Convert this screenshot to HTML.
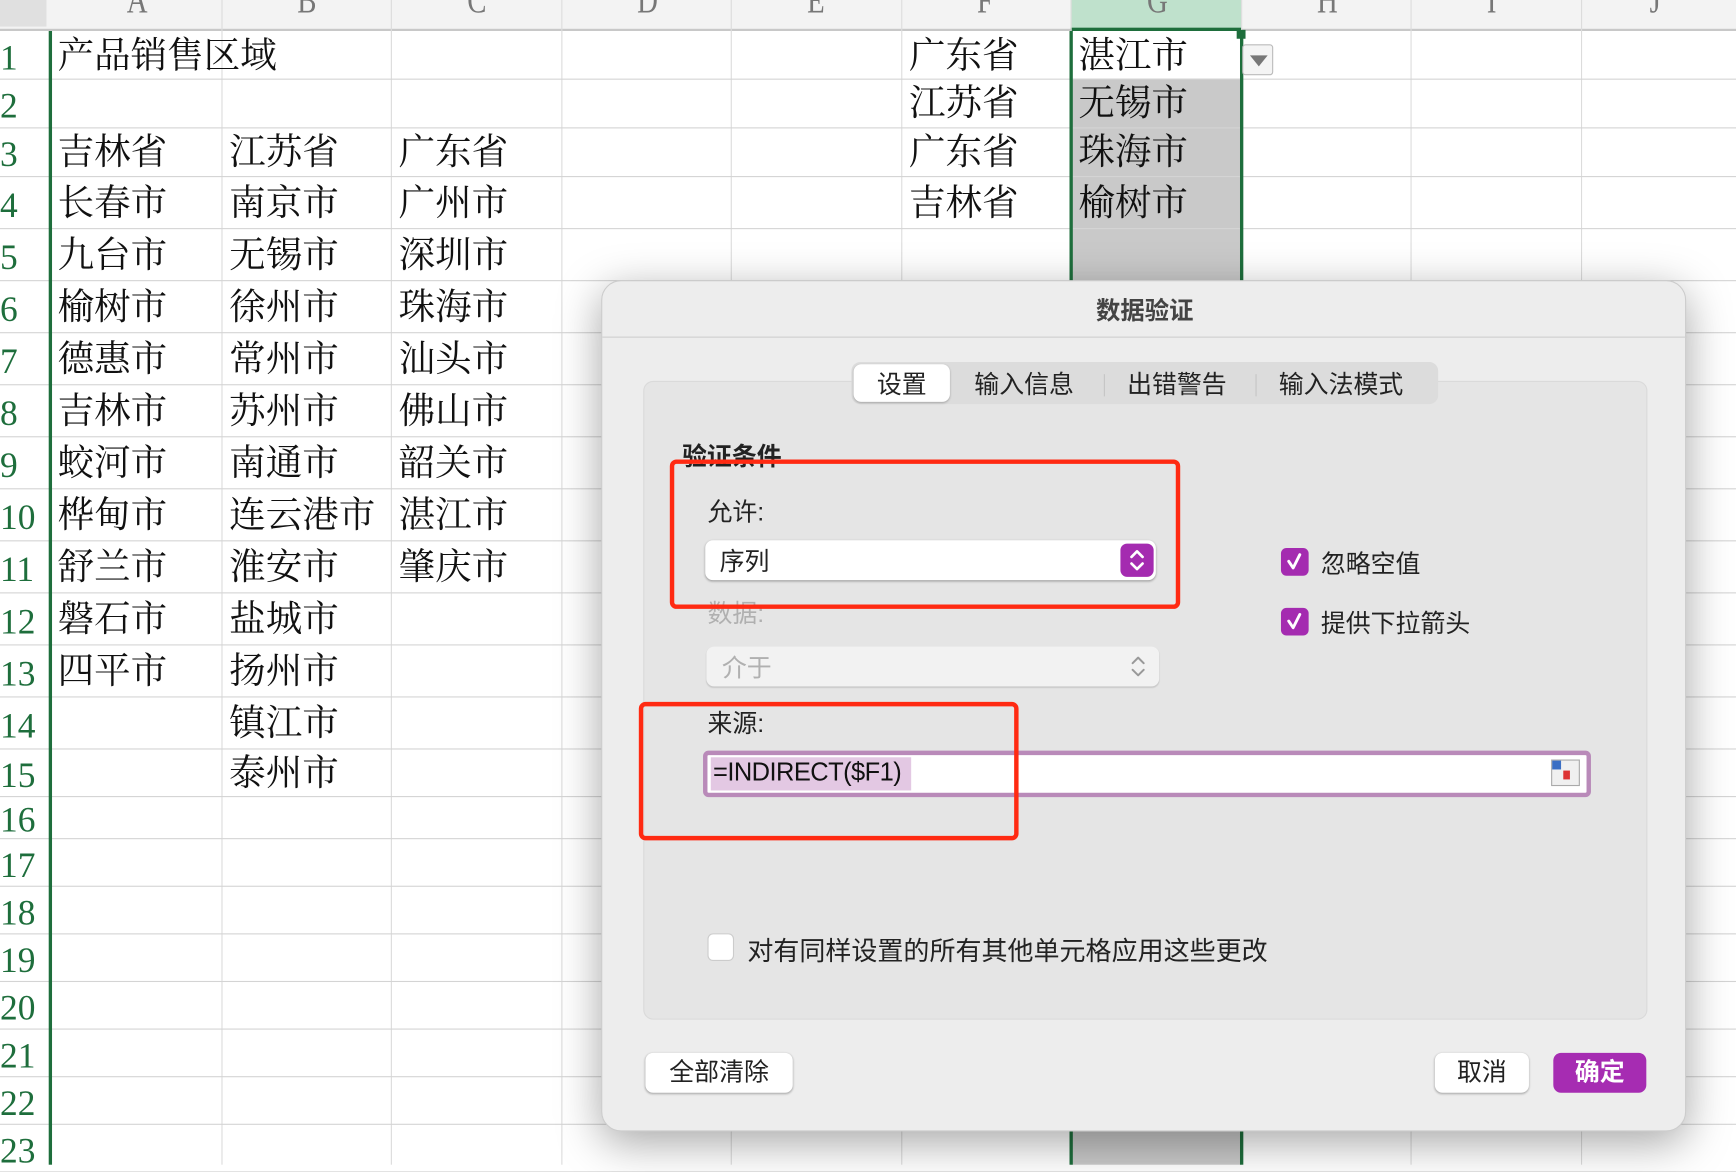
<!DOCTYPE html>
<html><head><meta charset="utf-8"><style>
*{margin:0;padding:0;box-sizing:border-box}
html,body{width:1736px;height:1164px;overflow:hidden;background:#fff}
#w{position:absolute;left:0;top:0;width:1568px;height:1052px;transform:scale(1.10714);transform-origin:0 0;font-family:"Liberation Serif","Noto Serif CJK SC",serif}
.a{position:absolute}
.hl{position:absolute;left:0;width:1568px;height:1px;background:#d4d4d4}
.vl{position:absolute;top:0;width:1px;height:1052px;background:#dcdcdc}
.t{position:absolute;font-size:33px;line-height:1;color:#111;white-space:nowrap}
.rn{position:absolute;left:0;width:40px;font-size:32px;color:#1e6e3c;line-height:1}
.ch{position:absolute;top:-14px;font-size:26px;color:#777;transform:scaleY(1.3)}
.d{font-family:"Liberation Sans","Noto Sans CJK SC",sans-serif}
.d .f{font-size:22.5px}
</style></head><body><div id="w">
<div class="a" style="left:0;top:0;width:1568px;height:28px;background:#f3f3f3;border-bottom:2px solid #c8c8c8"></div>
<div class="a" style="left:0;top:0;width:42px;height:24px;background:#e0e0e0"></div>
<div class="a" style="left:967px;top:0;width:154px;height:28px;background:#bfe1cc;border-bottom:3px solid #1e6e3c"></div>
<div class="a" style="left:967px;top:71px;width:154px;height:981px;background:#c9c9c9"></div>
<div id="grid"></div>
<div class="a" style="left:44px;top:28px;width:3px;height:1024px;background:#1e6e3c"></div>
<div class="a" style="left:966px;top:28px;width:3px;height:1024px;background:#1e6e3c"></div>
<div class="a" style="left:1120px;top:28px;width:3px;height:1024px;background:#1e6e3c"></div>
<div class="a" style="left:1117px;top:27px;width:8px;height:8px;background:#1e6e3c"></div>
<div class="a" style="left:1122px;top:40px;width:28px;height:28px;background:#f4f4f4;border:1px solid #bbb;border-radius:3px"><div class="a" style="left:6px;top:9px;border-left:8px solid transparent;border-right:8px solid transparent;border-top:10px solid #777"></div></div>

<div class="a d" style="left:543px;top:253px;width:980px;height:769px;background:#ededed;border-radius:18px;box-shadow:0 10px 40px rgba(0,0,0,.35);border:1px solid #ccc">
 <div class="a" style="left:0;top:9px;width:980px;text-align:center;font-size:22px;font-weight:bold;color:#444">数据验证</div>
 <div class="a" style="left:0;top:50px;width:980px;height:1px;background:#cfcfcf"></div>
 <div class="a" style="left:37px;top:90px;width:907px;height:577px;background:#e5e5e5;border:1px solid #dadada;border-radius:9px"></div>
 <div class="a" style="left:225px;top:73px;width:530px;height:38px;background:#dcdcdc;border-radius:8px"></div>
 <div class="a" style="left:227px;top:75px;width:87px;height:34px;background:#fff;border-radius:7px;box-shadow:0 1px 2px rgba(0,0,0,.25)"></div>
 <div class="a f" style="left:248px;top:76px;color:#222">设置</div>
 <div class="a f" style="left:336px;top:76px;color:#222">输入信息</div>
 <div class="a" style="left:453px;top:84px;width:1px;height:20px;background:#c4c4c4"></div>
 <div class="a f" style="left:474px;top:76px;color:#222">出错警告</div>
 <div class="a" style="left:590px;top:84px;width:1px;height:20px;background:#c4c4c4"></div>
 <div class="a f" style="left:611px;top:76px;color:#222">输入法模式</div>
 <div class="a f" style="left:72px;top:141px;font-weight:bold;color:#222">验证条件</div>
 <div class="a f" style="left:95px;top:191px;color:#222">允许:</div>
 <div class="a" style="left:93px;top:234px;width:407px;height:36px;background:#fff;border-radius:7px;box-shadow:0 1px 2px rgba(0,0,0,.3)"></div>
 <div class="a f" style="left:106px;top:236px;color:#222">序列</div>
 <div class="a" style="left:468px;top:237px;width:30px;height:30px;background:#a42bb0;border-radius:6px">
  <svg width="30" height="30" viewBox="0 0 30 30"><path d="M10 12l5-5 5 5M10 18l5 5 5-5" fill="none" stroke="#fff" stroke-width="2.4" stroke-linecap="round" stroke-linejoin="round"/></svg></div>
 <div class="a f" style="left:95px;top:283px;color:#b0b0b0">数据:</div>
 <div class="a" style="left:94px;top:330px;width:409px;height:36px;background:#f2f2f2;border-radius:7px;box-shadow:0 1px 1px rgba(0,0,0,.12)"></div>
 <div class="a f" style="left:108px;top:332px;color:#b0b0b0">介于</div>
 <svg class="a" style="left:472px;top:333px" width="24" height="30" viewBox="0 0 24 30"><path d="M7 12l5-5 5 5M7 18l5 5 5-5" fill="none" stroke="#999" stroke-width="1.8" stroke-linecap="round" stroke-linejoin="round"/></svg>
 <div class="a f" style="left:95px;top:382px;color:#222">来源:</div>
 <div class="a" style="left:91px;top:424px;width:802px;height:42px;background:#fff;border:4px solid #b98ab9;border-radius:5px"></div>
 <div class="a" style="left:98px;top:430px;width:181px;height:30px;background:#e3c8e3"></div>
 <div class="a" style="left:100px;top:430px;font-size:23px;color:#111;letter-spacing:-0.5px">=INDIRECT($F1)</div>
 <div class="a" style="left:857px;top:432px;width:26px;height:24px;background:#f0f0f0;border:1px solid #aaa"><div class="a" style="left:0;top:0;width:8px;height:8px;background:#3b6fc4"></div><div class="a" style="left:10px;top:9px;width:6px;height:8px;background:#d33"></div></div>
 <div class="a" style="left:613px;top:241px;width:25px;height:25px;background:#a42bb0;border-radius:5px"><svg width="25" height="25" viewBox="0 0 25 25"><path d="M7 12l4 6 6-12" fill="none" stroke="#fff" stroke-width="2.6" stroke-linecap="round" stroke-linejoin="round"/></svg></div>
 <div class="a f" style="left:649px;top:238px;color:#222">忽略空值</div>
 <div class="a" style="left:613px;top:295px;width:25px;height:25px;background:#a42bb0;border-radius:5px"><svg width="25" height="25" viewBox="0 0 25 25"><path d="M7 12l4 6 6-12" fill="none" stroke="#fff" stroke-width="2.6" stroke-linecap="round" stroke-linejoin="round"/></svg></div>
 <div class="a f" style="left:649px;top:292px;color:#222">提供下拉箭头</div>
 <div class="a" style="left:95px;top:589px;width:24px;height:25px;background:#fff;border:1px solid #ccc;border-radius:5px"></div>
 <div class="a" style="left:131px;top:586px;font-size:23.5px;color:#222">对有同样设置的所有其他单元格应用这些更改</div>
 <div class="a f" style="left:39px;top:697px;width:133px;height:36px;background:#fff;border-radius:7px;box-shadow:0 1px 2px rgba(0,0,0,.3);text-align:center;line-height:36px;color:#222">全部清除</div>
 <div class="a f" style="left:752px;top:697px;width:85px;height:36px;background:#fff;border-radius:7px;box-shadow:0 1px 2px rgba(0,0,0,.3);text-align:center;line-height:36px;color:#222">取消</div>
 <div class="a f" style="left:859px;top:697px;width:84px;height:36px;background:#a62cb2;border-radius:7px;text-align:center;line-height:36px;color:#fff;font-weight:bold">确定</div>
</div>
<div class="a" style="left:605px;top:415px;width:461px;height:135px;border:4px solid #ff2a12;border-radius:6px"></div>
<div class="a" style="left:577px;top:634px;width:343px;height:125px;border:4px solid #ff2a12;border-radius:6px"></div>
</div>
<script>
var g=document.getElementById('grid'),h='';
var cx=[45,200,353,507,660,814,967,1121,1274,1428,1568];
var ry=[28,71,115,159,206,253,300,347,394,441,488,535,582,629,676,719,757,800,843,886,929,972,1015,1058];
for(var i=1;i<cx.length-1;i++)h+='<div class="vl" style="left:'+cx[i]+'px"></div>';
for(var i=1;i<ry.length;i++)h+='<div class="hl" style="top:'+ry[i]+'px"></div>';
var L='ABCDEFGHIJ';for(var i=0;i<10;i++)h+='<div class="ch" style="left:'+(cx[i]+(cx[i+1]-cx[i])/2-8)+'px">'+L[i]+'</div>';
for(var r=0;r<23;r++)h+='<div class="rn" style="top:'+((ry[r]+ry[r+1])/2-14)+'px">'+(r+1)+'</div>';
function put(c,r,s){h+='<div class="t" style="left:'+(cx[c]+7)+'px;top:'+((ry[r-1]+ry[r])/2-15)+'px">'+s+'</div>';}
put(0,1,'产品销售区域');
'吉林省 长春市 九台市 榆树市 德惠市 吉林市 蛟河市 桦甸市 舒兰市 磐石市 四平市'.split(' ').forEach(function(s,i){put(0,3+i,s)});
'江苏省 南京市 无锡市 徐州市 常州市 苏州市 南通市 连云港市 淮安市 盐城市 扬州市 镇江市 泰州市'.split(' ').forEach(function(s,i){put(1,3+i,s)});
'广东省 广州市 深圳市 珠海市 汕头市 佛山市 韶关市 湛江市 肇庆市'.split(' ').forEach(function(s,i){put(2,3+i,s)});
'广东省 江苏省 广东省 吉林省'.split(' ').forEach(function(s,i){put(5,1+i,s)});
'湛江市 无锡市 珠海市 榆树市'.split(' ').forEach(function(s,i){put(6,1+i,s)});
g.innerHTML=h;
</script>
</body></html>
